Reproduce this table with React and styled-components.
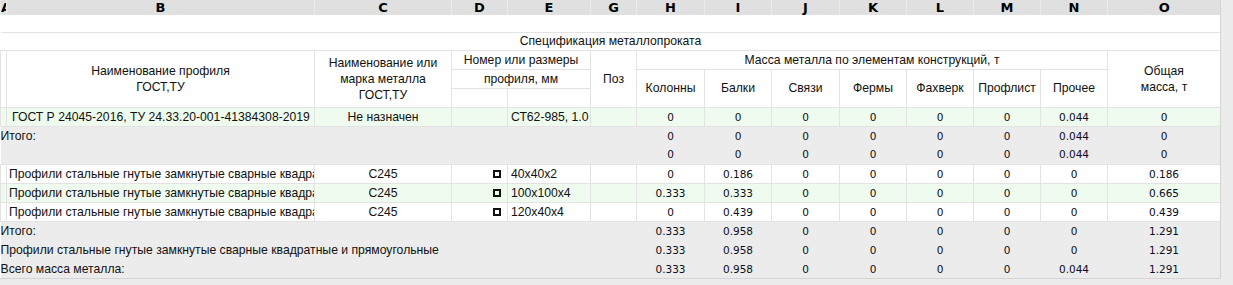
import React from "react";
import styled, { createGlobalStyle, css } from "styled-components";

const gridLine = "#e3e3e3";
const labelFont = `"Liberation Sans", Arial, sans-serif`;
const numberFont = `"DejaVu Sans", Verdana, sans-serif`;

const GlobalStyle = createGlobalStyle`
  body {
    margin: 0;
    background: #ececec;
  }
`;

const Sheet = styled.div`
  width: 1220px;
  background: #fff;
  border-right: 1px solid #d4d4d4;
  border-bottom: 1px solid #d4d4d4;
  overflow: hidden;
`;

const Grid = styled.table`
  border-collapse: collapse;
  table-layout: fixed;
  width: 1220px;
  font-family: ${labelFont};
  font-size: 12.2px;
  color: #111;
`;

const LetterRow = styled.tr`
  height: 11px;
  background: #e0e0e0;
`;

const Letter = styled.th`
  padding: 0;
  height: 11px;
  line-height: 8px;
  vertical-align: top;
  overflow: hidden;
  white-space: nowrap;
  font: bold 13px ${numberFont};
  color: #000;
  text-align: ${(props) => props.$align || "center"};
  border-left: 1px solid #ececec;
`;

const BlankRow = styled.tr`
  height: ${(props) => props.$h || "18px"};
  & > td {
    border-bottom: 1px solid ${gridLine};
  }
`;

const Title = styled.td`
  padding: 0;
  text-align: center;
  vertical-align: middle;
`;

const HeadRow = styled.tr`
  height: 19px;
`;

const Head = styled.td`
  padding: 0;
  text-align: center;
  vertical-align: middle;
  line-height: 16px;
  border: 1px solid ${gridLine};
  white-space: nowrap;
`;

const Row = styled.tr`
  height: 19px;
  background: ${(props) =>
    props.$tone === "green"
      ? "#effbee"
      : props.$tone === "gray"
      ? "#ececec"
      : "#fff"};
  & > td {
    border: ${(props) =>
      props.$tone === "gray" ? "none" : `1px solid ${gridLine}`};
  }
`;

const Cell = styled.td`
  padding: 0 ${(props) => props.$right || "0"} 0 ${(props) => props.$left || "0"};
  white-space: nowrap;
  overflow: ${(props) => (props.$spill ? "visible" : "hidden")};
  text-align: ${(props) => props.$align || "left"};
  vertical-align: middle;
  ${(props) =>
    props.$num &&
    css`
      font-family: ${numberFont};
      font-size: 10.5px;
      color: #0c0c1c;
    `}
`;

const BoxIcon = styled.span`
  display: inline-block;
  box-sizing: border-box;
  width: 8px;
  height: 8px;
  border: 2px solid #111;
  vertical-align: middle;
`;

const widths = [6, 308, 137, 56, 83, 46, 68, 67, 68, 67, 67, 67, 67, 113];
const letters = ["A", "B", "C", "D", "E", "G", "H", "I", "J", "K", "L", "M", "N", "O"];
const massHeads = ["Колонны", "Балки", "Связи", "Фермы", "Фахверк", "Профлист", "Прочее"];

const profile = "Профили стальные гнутые замкнутые сварные квадратные и прямоугольные";

const rows = [
  {
    tone: "green",
    name: "ГОСТ Р 24045-2016, ТУ 24.33.20-001-41384308-2019",
    indent: "5px",
    grade: "Не назначен",
    size: "СТ62-985, 1.0",
    mass: ["0", "0", "0", "0", "0", "0", "0.044"],
    total: "0",
  },
  { tone: "gray", label: "Итого:", mass: ["0", "0", "0", "0", "0", "0", "0.044"], total: "0" },
  { tone: "gray", label: "", mass: ["0", "0", "0", "0", "0", "0", "0.044"], total: "0" },
  {
    tone: "white",
    name: profile,
    grade: "С245",
    icon: true,
    size: "40x40x2",
    mass: ["0", "0.186", "0", "0", "0", "0", "0"],
    total: "0.186",
  },
  {
    tone: "green",
    name: profile,
    grade: "С245",
    icon: true,
    size: "100x100x4",
    mass: ["0.333", "0.333", "0", "0", "0", "0", "0"],
    total: "0.665",
  },
  {
    tone: "white",
    name: profile,
    grade: "С245",
    icon: true,
    size: "120x40x4",
    mass: ["0", "0.439", "0", "0", "0", "0", "0"],
    total: "0.439",
  },
  { tone: "gray", label: "Итого:", mass: ["0.333", "0.958", "0", "0", "0", "0", "0"], total: "1.291" },
  { tone: "gray", label: profile, mass: ["0.333", "0.958", "0", "0", "0", "0", "0"], total: "1.291" },
  {
    tone: "gray",
    label: "Всего масса металла:",
    mass: ["0.333", "0.958", "0", "0", "0", "0", "0.044"],
    total: "1.291",
  },
];

const DataRow = ({ row }) => {
  const numbers = (
    <>
      {row.mass.map((m, i) => (
        <Cell key={i} $num $align="center">
          {m}
        </Cell>
      ))}
      <Cell $num $align="center">
        {row.total}
      </Cell>
    </>
  );

  if (row.tone === "gray") {
    return (
      <Row $tone="gray">
        <Cell colSpan={6} $spill>
          {row.label}
        </Cell>
        {numbers}
      </Row>
    );
  }

  return (
    <Row $tone={row.tone}>
      <Cell />
      <Cell $left={row.indent || "2px"}>{row.name}</Cell>
      <Cell $align="center">{row.grade}</Cell>
      <Cell $align="right" $right="6px">
        {row.icon && <BoxIcon />}
      </Cell>
      <Cell $left="3px">{row.size}</Cell>
      <Cell />
      {numbers}
    </Row>
  );
};

export default function App() {
  return (
    <>
      <GlobalStyle />
      <Sheet>
        <Grid>
          <colgroup>
            {widths.map((w, i) => (
              <col key={i} style={{ width: w }} />
            ))}
          </colgroup>
          <tbody>
            <LetterRow>
              {letters.map((l, i) => (
                <Letter key={l} $align={i === 0 ? "right" : "center"}>
                  {l}
                </Letter>
              ))}
            </LetterRow>
            <BlankRow $h="17px">
              <Title colSpan={14} />
            </BlankRow>
            <BlankRow>
              <Title colSpan={14}>Спецификация металлопроката</Title>
            </BlankRow>
            <HeadRow>
              <Head rowSpan={3} />
              <Head rowSpan={3}>
                Наименование профиля
                <br />
                ГОСТ,ТУ
              </Head>
              <Head rowSpan={3}>
                Наименование или
                <br />
                марка металла
                <br />
                ГОСТ,ТУ
              </Head>
              <Head colSpan={2}>Номер или размеры</Head>
              <Head rowSpan={3}>Поз</Head>
              <Head colSpan={7}>Масса металла по элементам конструкций, т</Head>
              <Head rowSpan={3}>
                Общая
                <br />
                масса, т
              </Head>
            </HeadRow>
            <HeadRow>
              <Head colSpan={2}>профиля, мм</Head>
              {massHeads.map((h) => (
                <Head key={h} rowSpan={2}>
                  {h}
                </Head>
              ))}
            </HeadRow>
            <HeadRow>
              <Head />
              <Head />
            </HeadRow>
            {rows.map((row, i) => (
              <DataRow key={i} row={row} />
            ))}
          </tbody>
        </Grid>
      </Sheet>
    </>
  );
}
